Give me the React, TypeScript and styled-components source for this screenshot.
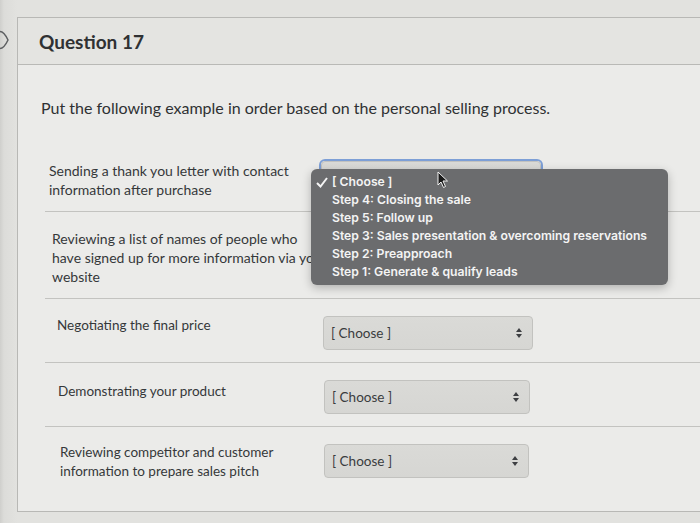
import styled, { createGlobalStyle } from 'styled-components'

const GlobalStyle = createGlobalStyle`
	html, body {
		margin: 0;
		padding: 0;
		background: #dfdfdc;
	}
	body {
		font-family: Lato, 'Noto Sans', sans-serif;
		width: 700px;
		height: 523px;
		overflow: hidden;
	}
`
const Page = styled.div`
	display: flex;
	height: 523px;
	padding-top: 17px;
	box-sizing: border-box;
	background: linear-gradient(90deg, #cfcfcc 0, #dcdcd9 4px, #e2e2df 17px);
`
const Rail = styled.div`
	width: 17px;
	flex-shrink: 0;
	padding-top: 13px;
	box-sizing: border-box;
`
const Card = styled.section`
	flex: 1;
	height: 495px;
	box-sizing: border-box;
	border: 1px solid #b8b8b5;
	border-right: none;
	background: #ebebe9;
	display: flex;
	flex-direction: column;
	overflow: hidden;
`
const Header = styled.header`
	height: 47px;
	flex-shrink: 0;
	box-sizing: border-box;
	display: flex;
	align-items: center;
	padding-left: 21px;
	background: #e4e4e1;
	border-bottom: 1px solid #b9b9b6;
	font-weight: 700;
	font-size: 19px;
	color: #2f3133;
`
const Body = styled.div`
	flex-shrink: 0;
	padding-left: 27px;
	display: flex;
	flex-direction: column;
`
const Prompt = styled.p`
	margin: 32px 0 25px -4px;
	font-size: 16px;
	line-height: 22px;
	color: #2f3133;
`
const Row = styled.div<{ $last?: boolean }>`
	display: flex;
	align-items: flex-start;
	gap: 4px;
	padding: 17px 0 ${({ $last }) => ($last ? '31px' : '12px')} 0;
	border-bottom: ${({ $last }) => ($last ? 'none' : '1px solid #c3c3c0')};
`
const Label = styled.div<{ $shift: number; $size: number; $lift: number }>`
	width: 272px;
	flex-shrink: 0;
	box-sizing: border-box;
	margin-top: ${({ $lift }) => -$lift}px;
	padding-left: ${({ $shift }) => $shift}px;
	font-size: ${({ $size }) => $size}px;
	line-height: 19px;
	color: #35383a;
	white-space: nowrap;
`
const SelectWrap = styled.div<{ $shift: number }>`
	position: relative;
	margin-left: ${({ $shift }) => $shift}px;
`
const Select = styled.div<{ $width: number; $focused?: boolean }>`
	width: ${({ $width }) => $width}px;
	height: 34px;
	box-sizing: border-box;
	display: flex;
	align-items: center;
	justify-content: space-between;
	padding: 0 10px 0 7px;
	background: linear-gradient(#dadad7, #d6d6d3);
	border: 1px solid #c2c2bf;
	border-radius: 4px;
	box-shadow: ${({ $focused }) => ($focused ? '0 0 0 2px #7d9fd6' : 'none')};
	font-size: 13.5px;
	color: #3a3c3e;
`
const Menu = styled.ul`
	position: absolute;
	left: -10px;
	top: 8px;
	width: 357px;
	height: 116px;
	box-sizing: border-box;
	margin: 0;
	padding: 4px 0 0 0;
	list-style: none;
	background: #6b6c6e;
	border-radius: 6px;
	box-shadow: 0 3px 10px rgba(0, 0, 0, 0.25);
	font-family: Inter, 'Liberation Sans', sans-serif;
	font-weight: 600;
	font-size: 12.2px;
	color: #f4f4f4;
	z-index: 2;
`
const MenuItem = styled.li`
	position: relative;
	height: 18px;
	line-height: 18px;
	padding-left: 21px;
	white-space: nowrap;
`
const Check = styled.svg`
	position: absolute;
	left: 5px;
	top: 4px;
`
const Cursor = styled.svg`
	position: absolute;
	left: 116px;
	top: 10px;
	z-index: 3;
`

const Arrows = () => (
	<svg width='6' height='12' viewBox='0 0 6 12'>
		<path d='M3 1 L6 5 L0 5 Z M3 11 L6 7 L0 7 Z' fill='#3d3f42' />
	</svg>
)

const rows = [
	{ lines: ['Sending a thank you letter with contact', 'information after purchase'], label: 4, size: 14, lift: 0, sel: 0, w: 220 },
	{
		lines: ['Reviewing a list of names of people who', 'have signed up for more information via your', 'website'],
		label: 7,
		size: 14,
		lift: 0,
		sel: 0,
		w: 216,
	},
	{ lines: ['Negotiating the final price'], label: 12, size: 13.5, lift: 0, sel: 2, w: 210 },
	{ lines: ['Demonstrating your product'], label: 13, size: 13.5, lift: -2, sel: 3, w: 206 },
	{
		lines: ['Reviewing competitor and customer', 'information to prepare sales pitch'],
		label: 15,
		size: 13.5,
		lift: 1,
		sel: 3,
		w: 205,
	},
]

const options = [
	'Step 4: Closing the sale',
	'Step 5: Follow up',
	'Step 3: Sales presentation & overcoming reservations',
	'Step 2: Preapproach',
	'Step 1: Generate & qualify leads',
]

const App: React.FC = () => {
	return (
		<Page>
			<GlobalStyle />
			<Rail>
				<svg width='10' height='20' viewBox='0 0 10 20'>
					<path d='M0 1.5 Q4 1.5 8 10 Q4 18.5 0 18.5' fill='none' stroke='#5d5f61' strokeWidth='1.5' />
				</svg>
			</Rail>
			<Card>
				<Header>Question 17</Header>
				<Body>
					<Prompt>Put the following example in order based on the personal selling process.</Prompt>
					{rows.map((r, i) => (
						<Row key={i} $last={i === rows.length - 1}>
							<Label $shift={r.label} $size={r.size} $lift={r.lift}>
								{r.lines.map((l) => (
									<div key={l}>{l}</div>
								))}
							</Label>
							<SelectWrap $shift={r.sel}>
								<Select $width={r.w} $focused={i === 0}>
									<span>[ Choose ]</span>
									<Arrows />
								</Select>
								{i === 0 && (
									<>
										<Menu>
											<MenuItem>
												<Check width='12' height='11' viewBox='0 0 12 11'>
													<path d='M1 6 L4.5 9.5 L11 1' fill='none' stroke='#f4f4f4' strokeWidth='2' />
												</Check>
												[ Choose ]
											</MenuItem>
											{options.map((o) => (
												<MenuItem key={o}>{o}</MenuItem>
											))}
										</Menu>
										<Cursor width='12' height='18' viewBox='0 0 12 18'>
											<path
												d='M1 1 L1 14 L4 11 L6.5 16.5 L8.5 15.5 L6 10 L10.5 10 Z'
												fill='#1a1a1a'
												stroke='#f2f2f2'
												strokeWidth='1'
												strokeLinejoin='round'
											/>
										</Cursor>
									</>
								)}
							</SelectWrap>
						</Row>
					))}
				</Body>
			</Card>
		</Page>
	)
}
export default App
